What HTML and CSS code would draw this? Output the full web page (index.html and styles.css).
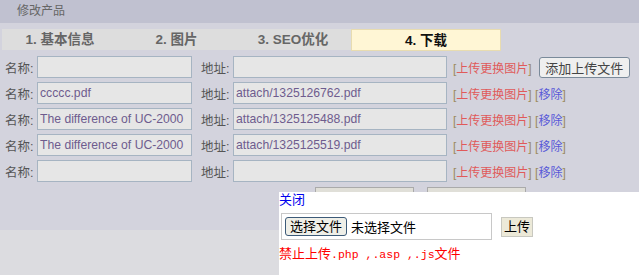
FILE: index.html
```html
<!DOCTYPE html>
<html lang="zh-CN">
<head>
  <meta charset="UTF-8">
  <title>修改产品</title>
  <link rel="stylesheet" href="styles.css">
</head>
<body>

  <div class="page">
    <div class="header">修改产品</div>

    <div class="tabs">
      <div class="tab t1">1. 基本信息</div>
      <div class="tab t2">2. 图片</div>
      <div class="tab t3">3. SEO优化</div>
      <div class="tab active">4. 下载</div>
    </div>

    <div class="rows">
      <div class="row">
        <span class="lbl">名称:</span>
        <input class="name" type="text" value="">
        <span class="lbl addr-lbl">地址:</span>
        <input class="addr" type="text" value="">
        <span class="ops"><span class="br">[</span><a class="up">上传更换图片</a><span class="br">]</span></span>
        <button class="add" type="button">添加上传文件</button>
      </div>
      <div class="row">
        <span class="lbl">名称:</span>
        <input class="name" type="text" value="ccccc.pdf">
        <span class="lbl addr-lbl">地址:</span>
        <input class="addr" type="text" value="attach/1325126762.pdf">
        <span class="ops"><span class="br">[</span><a class="up">上传更换图片</a><span class="br">]</span> <span class="br">[</span><a class="rm">移除</a><span class="br">]</span></span>
      </div>
      <div class="row">
        <span class="lbl">名称:</span>
        <input class="name" type="text" value="The difference of UC-2000">
        <span class="lbl addr-lbl">地址:</span>
        <input class="addr" type="text" value="attach/1325125488.pdf">
        <span class="ops"><span class="br">[</span><a class="up">上传更换图片</a><span class="br">]</span> <span class="br">[</span><a class="rm">移除</a><span class="br">]</span></span>
      </div>
      <div class="row">
        <span class="lbl">名称:</span>
        <input class="name" type="text" value="The difference of UC-2000">
        <span class="lbl addr-lbl">地址:</span>
        <input class="addr" type="text" value="attach/1325125519.pdf">
        <span class="ops"><span class="br">[</span><a class="up">上传更换图片</a><span class="br">]</span> <span class="br">[</span><a class="rm">移除</a><span class="br">]</span></span>
      </div>
      <div class="row">
        <span class="lbl">名称:</span>
        <input class="name" type="text" value="">
        <span class="lbl addr-lbl">地址:</span>
        <input class="addr" type="text" value="">
        <span class="ops"><span class="br">[</span><a class="up">上传更换图片</a><span class="br">]</span> <span class="br">[</span><a class="rm">移除</a><span class="br">]</span></span>
      </div>
    </div>

    <div class="actions">
      <button class="big" type="button">保存</button>
      <button class="big" type="button">返回</button>
    </div>
  </div>

  <div class="popup">
    <a class="close">关闭</a>
    <div class="upload">
      <div class="filebox">
        <span class="pick">选择文件</span>
        <span class="none">未选择文件</span>
      </div>
      <span class="send">上传</span>
    </div>
    <div class="warn">禁止上传<span class="mono">.php ,.asp ,.js</span>文件</div>
  </div>

</body>
</html>
```

FILE: styles.css
```css
body {
  margin: 0;
  background: #dcdce0;
  font-family: "Liberation Sans", "Noto Sans CJK SC", sans-serif;
  font-size: 12px;
  color: #555;
  position: relative;
  height: 275px;
  overflow: hidden;
}
.page {
  background: #d3d3dd;
  height: 230px;
}
.header {
  height: 23px;
  line-height: 23px;
  padding-left: 17px;
  background: #c0c1d0;
  color: #666;
}
.tabs {
  display: flex;
  margin: 6px 0 0 2px;
  height: 22px;
}
.tab {
  background: #dddddd;
  height: 21px;
  line-height: 21px;
  text-align: center;
  font-size: 13.5px;
  font-weight: bold;
  color: #666;
}
.t1 { width: 116px; }
.t2 { width: 117px; }
.t3 { width: 116px; }
.tab.active {
  width: 148px;
  height: 20px;
  background: #fff6d5;
  border: 1px solid #e8dcb0;
  color: #111;
}
.rows {
  margin-top: 3px;
  padding-left: 5px;
}
.row {
  display: flex;
  align-items: center;
  height: 26px;
}
.lbl {
  width: 32px;
  color: #555;
  font-size: 12.5px;
}
.addr-lbl {
  margin-left: 9px;
}
input {
  height: 22px;
  box-sizing: border-box;
  border: 1px solid #a6b4c2;
  background: #e6e6e6;
  padding: 0 2px;
  font-family: "Liberation Sans", "Noto Sans CJK SC", sans-serif;
  font-size: 12.2px;
  color: #6e5c8e;
}
.name { width: 155px; }
.addr { width: 214px; }
.ops {
  margin-left: 6px;
  white-space: pre;
}
.br { color: #9a8a60; }
.up { color: #e05a5a; }
.rm { color: #5a5ad8; }
.add {
  margin-left: 7px;
  height: 21px;
  width: 91px;
  padding: 0;
  border: 1px solid #7a8a9a;
  border-radius: 3px;
  background: #efefef;
  color: #444;
  font-family: "Liberation Sans", "Noto Sans CJK SC", sans-serif;
  font-size: 13px;
}
.actions {
  display: flex;
  gap: 13px;
  margin: 3px 0 0 315px;
}
.big {
  width: 99px;
  height: 24px;
  border: 1px solid #aaa;
  background: #e0dfd8;
}
.popup {
  position: absolute;
  left: 279px;
  top: 192px;
  width: 360px;
  height: 83px;
  background: #fff;
  font-size: 13px;
}
.close {
  display: block;
  color: #0000ee;
  line-height: 15px;
}
.upload {
  display: flex;
  align-items: center;
  margin: 6px 0 0 2px;
}
.filebox {
  display: flex;
  align-items: center;
  width: 206px;
  height: 25px;
  border: 1px solid #c8c8c8;
  padding-left: 3px;
}
.pick {
  border: 1px solid #3c5a78;
  border-radius: 3px;
  background: #efefe8;
  color: #000;
  padding: 0 4px;
  line-height: 17px;
}
.none {
  margin-left: 4px;
  color: #000;
}
.send {
  margin-left: 9px;
  border: 1px solid #c8c8c0;
  background: #ece9d8;
  color: #000;
  padding: 1px 2px;
  line-height: 16px;
}
.warn {
  color: #ff0000;
  margin-top: 3px;
}
.mono {
  font-family: "Liberation Mono", monospace;
  font-size: 11.5px;
}
```
